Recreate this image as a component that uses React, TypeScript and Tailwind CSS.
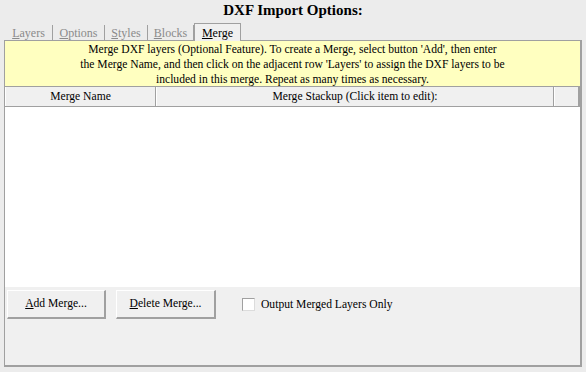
function Tab({ label, width }: { label: string; width: string }) {
  return (
    <div className={`${width} h-[15px] flex items-center justify-center border-r border-[#a0a0a0] text-[12px] leading-[15px] text-[#8a8a8a] pt-[2px]`}>
      <span>
        <span className="underline">{label[0]}</span>
        {label.slice(1)}
      </span>
    </div>
  )
}

function Button({ label, width }: { label: string; width: string }) {
  return (
    <button
      className={`${width} h-[29px] bg-[#f0f0f0] border border-t-white border-l-white border-r-[#a0a0a0] border-b-[#a0a0a0] border-r-2 border-b-2 text-[11.6px] text-black font-['Liberation_Serif','Times_New_Roman',serif]`}
    >
      <span className="underline">{label[0]}</span>
      {label.slice(1)}
    </button>
  )
}

export default function App() {
  return (
    <div className="w-[586px] h-[372px] bg-[#ececec] flex flex-col text-black font-['Liberation_Serif','Times_New_Roman',serif]">
      {/* Title */}
      <div className="h-[23px] pt-[1px] text-center text-[15px] leading-[18px] font-bold">DXF Import Options:</div>

      {/* Tabs */}
      <div className="ml-[5px] h-[17px] flex items-end">
        <Tab label="Layers" width="w-[48px]" />
        <Tab label="Options" width="w-[52px]" />
        <Tab label="Styles" width="w-[43px]" />
        <Tab label="Blocks" width="w-[46px]" />
        <div className="relative z-10 -mb-[1px] w-[47px] h-[18px] flex items-center justify-center bg-[#f0f0f0] border-t border-l border-r border-[#a0a0a0] text-[12px] leading-[15px] pt-[2px]">
          <span>
            <span className="underline">M</span>erge
          </span>
        </div>
      </div>

      {/* Panel */}
      <div className="ml-[4px] w-[578px] h-[327px] flex flex-col bg-[#f0f0f0] border-t border-l border-r-2 border-b-2 border-[#a0a0a0]">
        <div className="h-[45px] bg-[#ffffc0] text-center text-[11.6px] leading-[15px] pt-[1px]">
          Merge DXF layers (Optional Feature). To create a Merge, select button 'Add', then enter
          <br />
          the Merge Name, and then click on the adjacent row 'Layers' to assign the DXF layers to be
          <br />
          included in this merge. Repeat as many times as necessary.
        </div>

        <div className="h-[21px] flex border-t border-b border-[#a0a0a0] bg-[#f0f0f0] text-[11.6px] leading-[19px]">
          <div className="w-[151px] text-center border-l border-white border-r border-r-[#a0a0a0]">Merge Name</div>
          <div className="w-[398px] text-center border-l border-white border-r border-r-[#a0a0a0]">
            Merge Stackup (Click item to edit):
          </div>
          <div className="w-[26px] border-l border-white border-r-2 border-r-[#a0a0a0]" />
        </div>

        <div className="h-[180px] bg-white" />

        <div className="flex items-center pt-[3px] pl-[2px]">
          <Button label="Add Merge..." width="w-[99px]" />
          <div className="w-[10px]" />
          <Button label="Delete Merge..." width="w-[100px]" />
          <div className="ml-[26px] flex items-center gap-[6px] text-[11.6px]">
            <div className="w-[13px] h-[13px] bg-white border border-t-[#a0a0a0] border-l-[#a0a0a0] border-r-[#dcdcdc] border-b-[#dcdcdc]" />
            <span>Output Merged Layers Only</span>
          </div>
        </div>
      </div>
    </div>
  )
}
